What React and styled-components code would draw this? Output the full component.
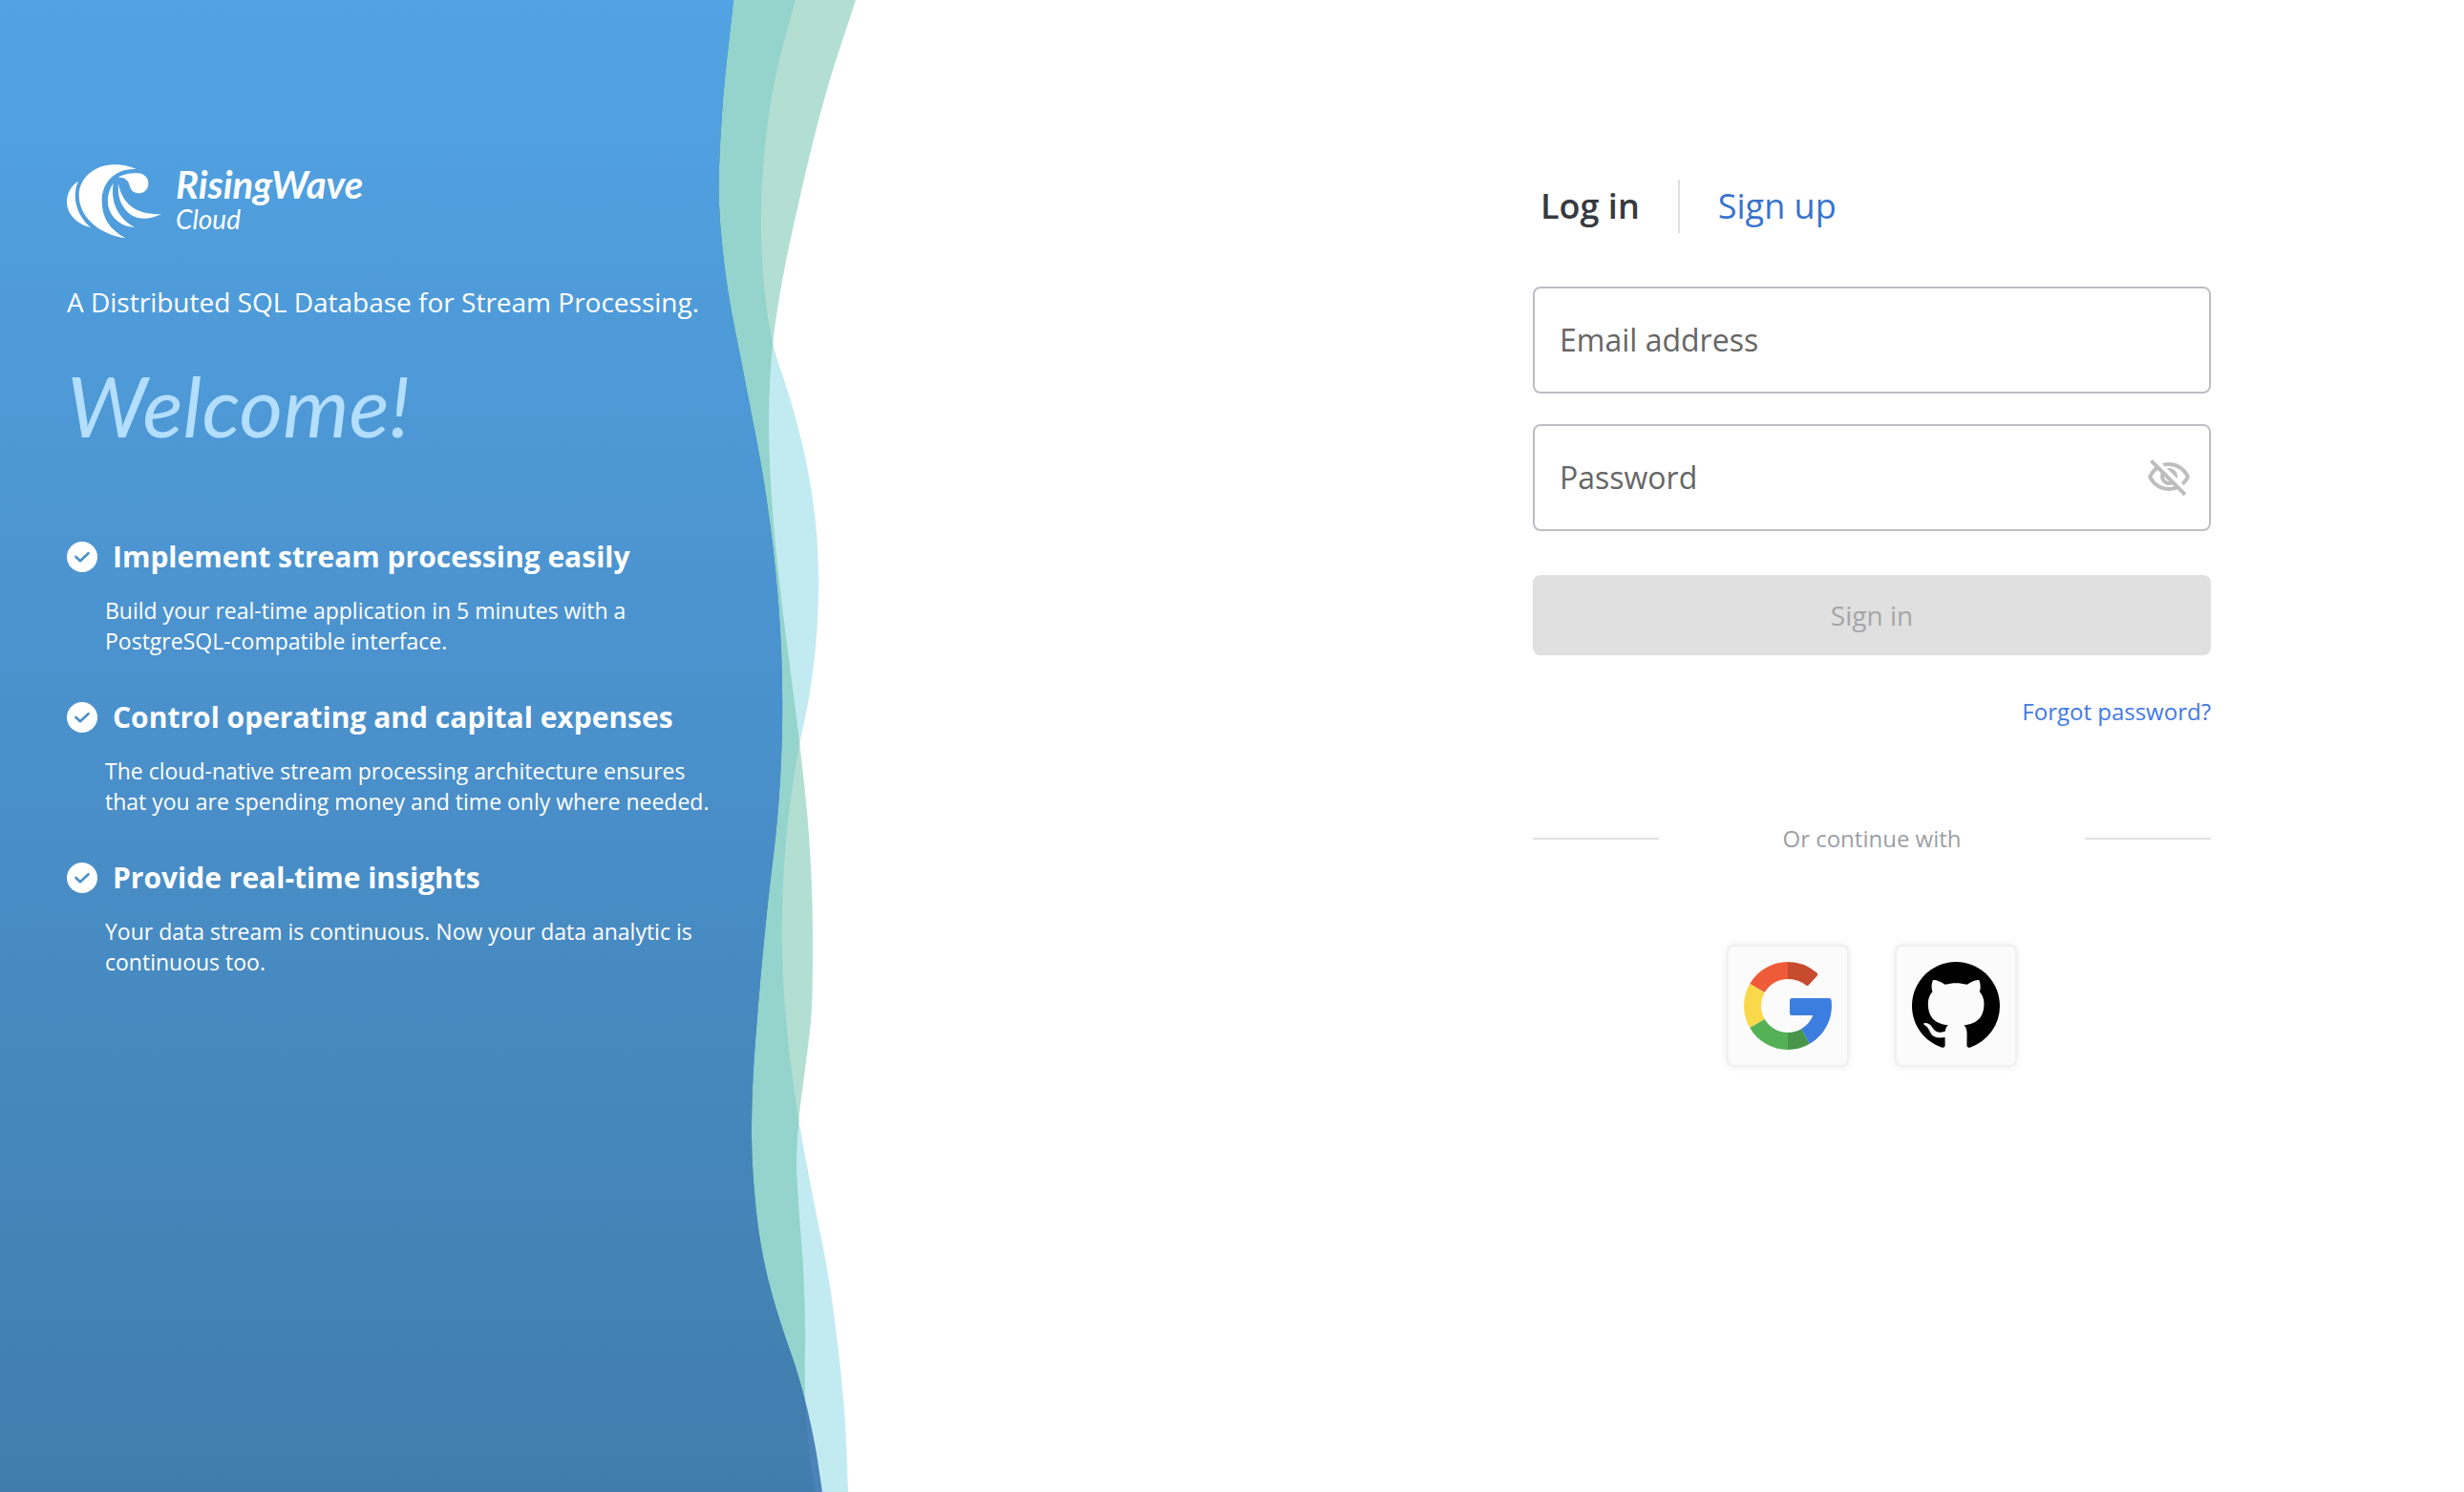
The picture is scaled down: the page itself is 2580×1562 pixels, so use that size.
import React from 'react';
import styled, { createGlobalStyle } from 'styled-components';
import { MdOutlineVisibilityOff } from 'react-icons/md';

const GlobalStyle = createGlobalStyle`
  *, *::before, *::after { box-sizing: border-box; }
  body {
    margin: 0;
    background: #ffffff;
    font-family: "Open Sans", "Noto Sans", sans-serif;
  }
  h1, h2, p, ul { margin: 0; padding: 0; }
  button, input { font-family: inherit; }
`;

const Page = styled.div`
  display: grid;
  grid-template-columns: 67fr 62fr;
  min-height: 100vh;
`;

/* ---------- Hero ---------- */

const Hero = styled.aside`
  position: relative;
  isolation: isolate;
  padding: 172px 70px 80px;
  color: #ffffff;
`;

const WaveArt = styled.svg`
  position: absolute;
  inset: 0 auto 0 0;
  width: 900px;
  height: 100%;
  z-index: -1;
`;

const HeroContent = styled.div`
  display: flex;
  flex-direction: column;
  max-width: 690px;
`;

const Brand = styled.div`
  display: flex;
  align-items: center;
  gap: 14px;
  margin-bottom: 46px;
`;

const BrandMark = styled.svg`
  width: 100px;
  height: 78px;
`;

const BrandText = styled.div`
  display: flex;
  flex-direction: column;
  font-family: "Lato", "Open Sans", sans-serif;
  font-style: italic;
  line-height: 36px;
`;

const BrandName = styled.span`
  font-size: 40px;
  font-weight: 700;
`;

const BrandProduct = styled.span`
  font-size: 28px;
  font-weight: 400;
`;

const Tagline = styled.p`
  font-size: 28px;
  line-height: 40px;
  margin-bottom: 38px;
  white-space: nowrap;
`;

const Welcome = styled.h1`
  font-family: "Lato", "Open Sans", sans-serif;
  font-size: 88px;
  font-style: italic;
  font-weight: 400;
  line-height: 100px;
  color: #b3deff;
  margin-bottom: 89px;
`;

const FeatureList = styled.ul`
  display: flex;
  flex-direction: column;
  gap: 44px;
  list-style: none;
`;

const FeatureHead = styled.div`
  display: flex;
  align-items: center;
  gap: 16px;
  height: 40px;
  margin-bottom: 20px;
`;

const FeatureTitle = styled.h2`
  font-size: 30px;
  font-weight: 700;
  line-height: 40px;
  white-space: nowrap;
`;

const FeatureText = styled.p`
  padding-left: 40px;
  font-size: 23px;
  line-height: 32px;
`;

const CheckBadge = styled.svg`
  flex: none;
  width: 32px;
  height: 32px;
`;

/* ---------- Form ---------- */

const FormPane = styled.main`
  display: flex;
  justify-content: center;
  align-items: flex-start;
  padding: 188px 40px 80px;
`;

const Panel = styled.div`
  width: 100%;
  max-width: 710px;
`;

const Tabs = styled.nav`
  display: flex;
  align-items: center;
  gap: 40px;
  height: 56px;
  padding-left: 8px;
  margin-bottom: 56px;
`;

const Tab = styled.a`
  font-size: 36px;
  font-weight: ${(p) => (p.$active ? 600 : 500)};
  line-height: 48px;
  color: ${(p) => (p.$active ? '#363a40' : '#3873cf')};
  text-decoration: none;
`;

const TabDivider = styled.span`
  width: 2px;
  height: 56px;
  background: #e0e0e0;
`;

const Form = styled.form`
  display: flex;
  flex-direction: column;
`;

const Field = styled.div`
  display: flex;
  align-items: center;
  height: 112px;
  margin-bottom: 32px;
  padding: 0 18px 0 26px;
  border: 2px solid #bdbec4;
  border-radius: 8px;
`;

const FieldInput = styled.input`
  flex: 1;
  min-width: 0;
  height: 100%;
  padding: 0 0 2px;
  border: 0;
  outline: 0;
  background: transparent;
  font-size: 32px;
  color: #363a40;
  &::placeholder { color: #666666; opacity: 1; }
`;

const IconButton = styled.button`
  display: flex;
  padding: 0;
  border: 0;
  background: none;
  color: #bdbdbd;
`;

const SubmitButton = styled.button`
  height: 84px;
  margin-top: 14px;
  border: 0;
  border-radius: 8px;
  background: #e0e0e0;
  color: #a6a6a6;
  font-size: 28px;
  font-weight: 500;
`;

const ForgotLink = styled.a`
  align-self: flex-end;
  margin-top: 43px;
  font-size: 24px;
  line-height: 32px;
  color: #4279e6;
  text-decoration: none;
`;

const Separator = styled.div`
  display: flex;
  align-items: center;
  justify-content: space-between;
  margin: 101px 0 97px;
  font-size: 24px;
  line-height: 32px;
  color: #9b9fa4;
  &::before, &::after {
    content: "";
    width: 132px;
    height: 2px;
    background: #e0e0e0;
  }
`;

const Providers = styled.div`
  display: flex;
  justify-content: center;
  gap: 52px;
`;

const ProviderButton = styled.button`
  display: flex;
  align-items: center;
  justify-content: center;
  width: 124px;
  height: 124px;
  padding: 0;
  border: 0;
  border-radius: 6px;
  background: #fbfbfb;
  box-shadow: 0 0 0 2px #f0f0f0, 0 0 8px 2px rgba(0, 0, 0, 0.08);
  svg { width: 92px; height: 92px; }
`;

/* ---------- Drawings ---------- */

const BLUE_EDGE = [
  [768, 0], [756, 119], [753, 214], [760, 289], [780, 398], [800, 505], [812, 597], [818, 680],
  [819, 760], [815, 845], [803, 955], [793, 1064], [788, 1139], [787, 1189], [790, 1249],
  [797, 1305], [807, 1350], [820, 1393], [833, 1431], [843, 1466], [853, 1511], [861, 1562],
];

const GREEN_EDGE = [
  [896, 0], [867, 90], [837, 209], [820, 289], [809, 361], [805, 433], [807, 507], [815, 600],
  [826, 690], [838, 785], [845, 850], [850, 930], [851, 999], [849, 1069], [843, 1119],
  [836, 1177], [834, 1219], [836, 1259], [841, 1329], [843, 1390], [843, 1466], [846, 1510], [853, 1562],
];

const CYAN_EDGE = [
  [833, 0], [813, 75], [800, 164], [797, 244], [801, 308], [810, 363], [826, 413], [843, 478],
  [854, 547], [857, 604], [854, 677], [847, 731], [837, 780], [826, 852], [820, 925], [819, 994],
  [824, 1078], [836, 1170], [851, 1252], [867, 1334], [878, 1415], [885, 1490], [888, 1562],
];

/* Closes a smooth curve x(y) through the edge points against the left side. */
function waveShape(points) {
  const last = points.length - 1;
  const chord = points.slice(1).map((p, i) => (p[0] - points[i][0]) / (p[1] - points[i][1]));
  const slope = points.map((p, i) => {
    if (i === 0) return chord[0];
    if (i === last) return chord[last - 1];
    const before = p[1] - points[i - 1][1];
    const after = points[i + 1][1] - p[1];
    return (chord[i - 1] * after + chord[i] * before) / (before + after);
  });
  let d = `M0 0 L${points[0][0]} ${points[0][1]}`;
  for (let i = 0; i < last; i += 1) {
    const [x0, y0] = points[i];
    const [x1, y1] = points[i + 1];
    const h = (y1 - y0) / 3;
    d += ` C${x0 + slope[i] * h} ${y0 + h} ${x1 - slope[i + 1] * h} ${y1 - h} ${x1} ${y1}`;
  }
  return `${d} L0 1562 Z`;
}

function Waves() {
  const blue = waveShape(BLUE_EDGE);
  const green = waveShape(GREEN_EDGE);
  const cyan = waveShape(CYAN_EDGE);
  return (
    <WaveArt viewBox="0 0 900 1562" preserveAspectRatio="none" aria-hidden="true">
      <defs>
        <linearGradient id="sea" x1="0" y1="0" x2="0" y2="1">
          <stop offset="0" stopColor="#52a3e3" />
          <stop offset="0.5" stopColor="#4a90cb" />
          <stop offset="1" stopColor="#417dac" />
        </linearGradient>
        <clipPath id="greenClip"><path d={green} /></clipPath>
      </defs>
      <path d={cyan} fill="#c2ebf1" />
      <path d={green} fill="#b3dfd3" />
      <path d={cyan} fill="#94d4cc" clipPath="url(#greenClip)" />
      <path d={blue} fill="#4b82b8" />
      <path d={blue} fill="url(#sea)" clipPath="url(#greenClip)" />
    </WaveArt>
  );
}

function Logo() {
  return (
    <BrandMark viewBox="90 66 300 232" fill="#ffffff" aria-hidden="true">
      <path d="M126 118 C100 135 90 158 90 184 C90 226 130 256 165 263 C125 230 102 170 126 118 Z" />
      <path d="M308 80 C288 71 265 66 240 66 C175 66 128 110 128 162 C128 230 190 286 275 297 C225 270 200 235 200 178 C200 125 240 76 308 80 Z" />
      <path d="M252 106 C265 97 285 93 312 93 C333 93 346 108 346 125 C346 143 333 156 316 156 C300 156 291 146 288 135 C284 116 275 106 252 106 Z" />
      <path d="M236 124 C212 160 214 200 234 228 C250 250 275 262 303 263 C255 236 226 190 236 124 Z" />
      <path d="M252 126 C250 150 252 176 268 199 C292 236 335 247 388 221 C318 226 264 196 252 126 Z" />
    </BrandMark>
  );
}

function Check() {
  return (
    <CheckBadge viewBox="0 0 32 32" fill="none" aria-hidden="true">
      <circle cx="16" cy="16" r="16" fill="#ffffff" />
      <path d="M9.5 16 L14 20.2 L22.5 12.2" stroke="#4a90cb" strokeWidth="2.6" strokeLinecap="round" strokeLinejoin="round" />
    </CheckBadge>
  );
}

function GoogleIcon() {
  return (
    <svg viewBox="0 0 92 92" aria-hidden="true">
      <path fill="#ef5b38" d="M46 0 A46 46 0 0 0 6.2 23 L21.8 32 A28 28 0 0 1 46 18 Z" />
      <path fill="#c74b2e" d="M46 0 A46 46 0 0 1 76.5 11.6 Q77.8 13 76.8 14.5 L68 24 Q66.6 25.4 65 24.6 A28 28 0 0 0 46 18 Z" />
      <path fill="#f9d84a" d="M6.2 23 A46 46 0 0 0 6.2 69 L21.8 60 A28 28 0 0 1 21.8 32 Z" />
      <path fill="#54b156" d="M6.2 69 A46 46 0 0 0 46 92 V74 A28 28 0 0 1 21.8 60 Z" />
      <path fill="#479649" d="M46 92 A46 46 0 0 0 69 85.8 L60 70.2 A28 28 0 0 1 46 74 Z" />
      <path fill="#3c7de0" d="M50.5 38 H89 Q91.3 38 91.5 40 A46 46 0 0 1 69 85.8 L60 70.2 A28 28 0 0 0 72.3 56 H50.5 Q48 56 48 53.5 V40.5 Q48 38 50.5 38 Z" />
    </svg>
  );
}

function GitHubIcon() {
  return (
    <svg viewBox="0 0 16 16" fill="#000000" aria-hidden="true">
      <path d="M8 0C3.58 0 0 3.58 0 8c0 3.54 2.29 6.53 5.47 7.59.4.07.55-.17.55-.38 0-.19-.01-.82-.01-1.49-2.01.37-2.53-.49-2.69-.94-.09-.23-.48-.94-.82-1.13-.28-.15-.68-.52-.01-.53.63-.01 1.08.58 1.23.82.72 1.21 1.87.87 2.33.66.07-.52.28-.87.51-1.07-1.78-.2-3.64-.89-3.64-3.95 0-.87.31-1.59.82-2.15-.08-.2-.36-1.02.08-2.12 0 0 .67-.21 2.2.82.64-.18 1.32-.27 2-.27s1.36.09 2 .27c1.53-1.04 2.2-.82 2.2-.82.44 1.1.16 1.92.08 2.12.51.56.82 1.27.82 2.15 0 3.07-1.87 3.75-3.65 3.95.29.25.54.73.54 1.48 0 1.07-.01 1.93-.01 2.2 0 .21.15.46.55.38A8.01 8.01 0 0 0 16 8c0-4.42-3.58-8-8-8z" />
    </svg>
  );
}

const FEATURES = [
  {
    title: 'Implement stream processing easily',
    text: 'Build your real-time application in 5 minutes with a PostgreSQL-compatible interface.',
  },
  {
    title: 'Control operating and capital expenses',
    text: 'The cloud-native stream processing architecture ensures that you are spending money and time only where needed.',
  },
  {
    title: 'Provide real-time insights',
    text: 'Your data stream is continuous. Now your data analytic is continuous too.',
  },
];

export default function App() {
  return (
    <Page>
      <GlobalStyle />
      <Hero>
        <Waves />
        <HeroContent>
          <Brand>
            <Logo />
            <BrandText>
              <BrandName>RisingWave</BrandName>
              <BrandProduct>Cloud</BrandProduct>
            </BrandText>
          </Brand>
          <Tagline>A Distributed SQL Database for Stream Processing.</Tagline>
          <Welcome>Welcome!</Welcome>
          <FeatureList>
            {FEATURES.map((f) => (
              <li key={f.title}>
                <FeatureHead>
                  <Check />
                  <FeatureTitle>{f.title}</FeatureTitle>
                </FeatureHead>
                <FeatureText>{f.text}</FeatureText>
              </li>
            ))}
          </FeatureList>
        </HeroContent>
      </Hero>
      <FormPane>
        <Panel>
          <Tabs>
            <Tab href="#login" $active aria-current="page">Log in</Tab>
            <TabDivider />
            <Tab href="#signup">Sign up</Tab>
          </Tabs>
          <Form onSubmit={(e) => e.preventDefault()}>
            <Field>
              <FieldInput type="email" aria-label="Email address" placeholder="Email address" />
            </Field>
            <Field>
              <FieldInput type="password" aria-label="Password" placeholder="Password" />
              <IconButton type="button" aria-label="Show password">
                <MdOutlineVisibilityOff size={48} />
              </IconButton>
            </Field>
            <SubmitButton type="submit" disabled>Sign in</SubmitButton>
            <ForgotLink href="#forgot">Forgot password?</ForgotLink>
          </Form>
          <Separator>Or continue with</Separator>
          <Providers>
            <ProviderButton type="button" aria-label="Continue with Google"><GoogleIcon /></ProviderButton>
            <ProviderButton type="button" aria-label="Continue with GitHub"><GitHubIcon /></ProviderButton>
          </Providers>
        </Panel>
      </FormPane>
    </Page>
  );
}
